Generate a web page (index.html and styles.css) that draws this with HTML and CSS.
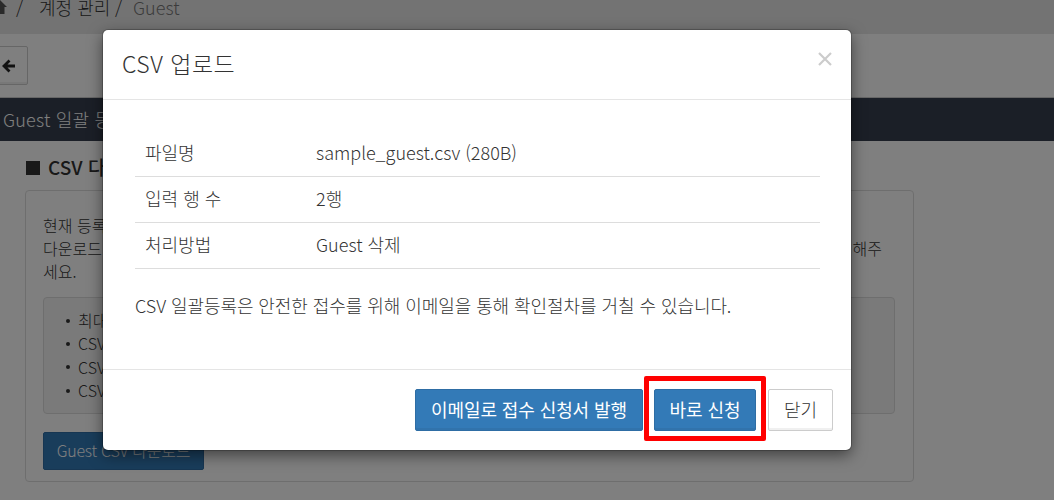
FILE: index.html
```
<!DOCTYPE html>
<html lang="ko">
<head>
  <meta charset="UTF-8">
  <meta name="viewport" content="width=device-width, initial-scale=1.0">
  <title>CSV 업로드</title>
  <link rel="stylesheet" href="styles.css">
</head>
<body>
  <div class="page">
    <nav class="breadcrumb">
      <svg class="home" viewBox="0 0 14 14" width="14" height="14"><path d="M7 0L14 7H11.500V14H2V7H0Z" fill="#555"/></svg>
      <span class="sep">/</span>
      <span class="crumb">계정 관리</span>
      <span class="sep">/</span>
      <span class="crumb current">Guest</span>
    </nav>
    <div class="toolbar">
      <button class="btn-back">
        <svg viewBox="0 0 14 14" width="14" height="14"><path d="M7.500 1.500L2 7L7.500 12.500M2.500 7H13" fill="none" stroke="#222" stroke-width="2.800"/></svg>
      </button>
    </div>
    <h1 class="page-title">Guest 일괄 등록</h1>
    <main class="content">
      <h2><span class="square"></span>CSV 다운로드</h2>
      <div class="panel">
        <div class="desc">
          <div>현재 등록</div>
          <div class="desc-row"><span>다운로드</span><span>해주</span></div>
          <div>세요.</div>
        </div>
        <ul class="well">
          <li>최대</li>
          <li>CSV</li>
          <li>CSV</li>
          <li>CSV</li>
        </ul>
        <button class="btn-download">Guest CSV 다운로드</button>
      </div>
    </main>
  </div>

  <div class="backdrop"></div>

  <!-- Upload modal -->
  <div class="modal">
    <div class="modal-header">
      <h4>CSV 업로드</h4>
      <button class="close">
        <svg viewBox="0 0 14 14" width="14" height="14"><path d="M1 1L13 13M13 1L1 13" stroke="#ccc" stroke-width="2.200"/></svg>
      </button>
    </div>
    <div class="modal-body">
      <table>
        <tr><th>파일명</th><td>sample_guest.csv (280B)</td></tr>
        <tr><th>입력 행 수</th><td>2행</td></tr>
        <tr><th>처리방법</th><td>Guest 삭제</td></tr>
      </table>
      <p>CSV 일괄등록은 안전한 접수를 위해 이메일을 통해 확인절차를 거칠 수 있습니다.</p>
    </div>
    <div class="modal-footer">
      <button class="btn btn-primary btn-mail">이메일로 접수 신청서 발행</button>
      <button class="btn btn-primary btn-apply">바로 신청</button>
      <button class="btn btn-default">닫기</button>
    </div>
  </div>
</body>
</html>
```

FILE: styles.css
```
* {
  box-sizing: border-box;
}
body {
  margin: 0;
  height: 500px;
  overflow: hidden;
  position: relative;
  font-family: "Noto Sans CJK KR", sans-serif;
  font-weight: 300;
  color: #333;
  background-color: #fff;
}
button {
  font-family: inherit;
  font-weight: inherit;
  padding: 0;
}
h1, h2, h4, p, ul {
  margin: 0;
  padding: 0;
  font-weight: 300;
}
svg {
  display: block;
}

/* Page */
.breadcrumb {
  display: flex;
  align-items: center;
  height: 34px;
  padding-bottom: 20px;
  background-color: #e7e7e7;
  font-size: 18px;
  line-height: 14px;
}
.home {
  margin-left: -7px;
}
.sep {
  width: 8px;
  margin-left: 9px;
}
.crumb {
  width: 71px;
  margin-left: 15px;
  white-space: nowrap;
}
.crumb + .sep {
  margin-left: 5px;
}
.crumb.current {
  margin-left: 10px;
  color: #777;
}
.toolbar {
  height: 64px;
  padding-top: 12px;
  border-bottom: 1px solid #ccc;
}
.btn-back {
  display: flex;
  align-items: center;
  justify-content: flex-end;
  width: 38px;
  height: 39px;
  margin-left: -10px;
  padding-right: 11px;
  background-color: #fff;
  border: 1px solid #ccc;
  border-radius: 2px;
  box-shadow: inset 0 -2px 0 #f0f0f0;
}
.page-title {
  height: 43px;
  padding-left: 3px;
  background-color: #363e4e;
  color: #fff;
  font-size: 18px;
  line-height: 43px;
  letter-spacing: 0.2px;
}
.content {
  padding: 10px 0 0 25px;
}
h2 {
  display: flex;
  align-items: center;
  height: 30px;
  font-size: 19px;
  font-weight: 500;
}
.square {
  width: 14px;
  height: 14px;
  margin: 4px 8px 0 1px;
  background-color: #333;
}
.panel {
  width: 889px;
  height: 292px;
  margin-top: 9px;
  padding: 23px 18px 0 17px;
  border: 1px solid #ddd;
  border-radius: 4px;
}
.desc {
  font-size: 16px;
  line-height: 23px;
}
.desc-row {
  display: flex;
  justify-content: space-between;
  padding-right: 13px;
}
.well {
  height: 117px;
  margin-top: 14px;
  padding: 11px 0 0 22px;
  list-style: none;
  background-color: #f5f5f5;
  border: 1px solid #ddd;
  border-radius: 4px;
  font-size: 16px;
  line-height: 23.3px;
}
.well li {
  display: flex;
  align-items: center;
}
.well li::before {
  content: "";
  width: 4px;
  height: 4px;
  margin-right: 8px;
  border-radius: 50%;
  background-color: #333;
}
.btn-download {
  width: 161px;
  height: 38px;
  margin-top: 18px;
  padding-bottom: 2px;
  background-color: #337ab7;
  border: 1px solid #2e6da4;
  border-radius: 2px;
  color: #fff;
  font-size: 16px;
  letter-spacing: -0.25px;
}
.backdrop {
  position: absolute;
  inset: 0;
  background-color: rgba(0, 0, 0, 0.5);
}

/* Modal */
.modal {
  position: absolute;
  top: 30px;
  left: 103px;
  width: 748px;
  height: 420px;
  background-color: #fff;
  border-radius: 5px;
  box-shadow: 0 0 0 1px rgba(0, 0, 0, 0.2), 0 5px 15px rgba(0, 0, 0, 0.5);
}
.modal-header {
  display: flex;
  justify-content: space-between;
  height: 70px;
  padding: 15px 19px 0 19px;
  border-bottom: 1px solid #e5e5e5;
}
.modal-header h4 {
  font-size: 23px;
  line-height: 36px;
  letter-spacing: 0.5px;
}
.close {
  align-self: flex-start;
  margin-top: 7px;
  background: none;
  border: none;
}
.modal-body {
  height: 269px;
  padding: 30px 31px 0 32px;
  font-size: 18px;
}
table {
  width: 100%;
  border-collapse: collapse;
}
tr {
  height: 46px;
  border-bottom: 1px solid #ddd;
}
th, td {
  padding: 0 0 2px 10px;
  font-weight: 300;
  line-height: 26px;
  text-align: left;
}
th {
  width: 171px;
}
.modal-body p {
  margin-top: 23px;
  line-height: 26px;
  letter-spacing: -0.07px;
  white-space: nowrap;
}
.modal-footer {
  display: flex;
  justify-content: flex-end;
  height: 81px;
  padding: 19px 18px 0 0;
  border-top: 1px solid #e5e5e5;
}
.btn {
  width: 65px;
  height: 42px;
  padding-bottom: 2px;
  border-radius: 2px;
  font-size: 18px;
  white-space: nowrap;
}
.btn-primary {
  background-color: #337ab7;
  border: 1px solid #2e6da4;
  box-shadow: inset 0 -2px 0 #3173ac;
  color: #fff;
  font-weight: 400;
  letter-spacing: -0.1px;
}
.btn-default {
  background-color: #fff;
  border: 1px solid #ccc;
  box-shadow: inset 0 -2px 0 #f0f0f0;
  color: #333;
}
.btn-mail {
  width: 228px;
  margin-right: 11px;
}
.btn-apply {
  position: relative;
  width: 102px;
  margin-right: 12px;
}
/* highlight frame around the apply button */
.btn-apply::after {
  content: "";
  position: absolute;
  inset: -14px -11px -11px -11px;
  border: 5px solid #f00;
  border-radius: 2px;
}
```
